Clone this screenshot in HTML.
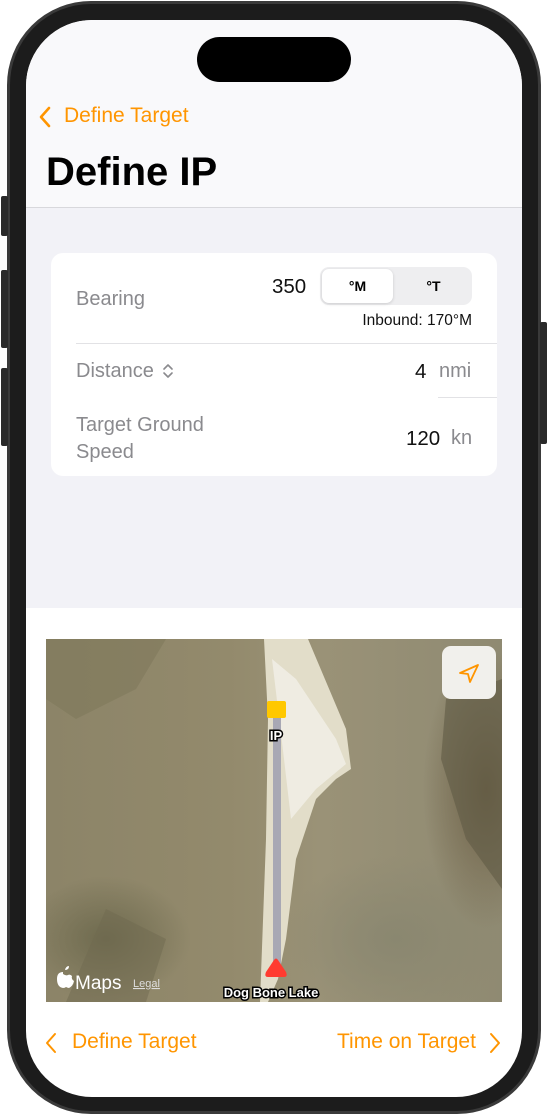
<!DOCTYPE html>
<html><head><meta charset="utf-8"><style>
*{margin:0;padding:0;box-sizing:border-box}
body{width:547px;height:1117px;background:#fff;position:relative;overflow:hidden;font-family:"Liberation Sans",sans-serif}
.frame{position:absolute;left:7px;top:1px;width:534px;height:1113px;border-radius:84px;background:#1c1c1c;border:3px solid #3a3a3a}
.btn{position:absolute;left:1px;width:7px;background:#2a2a2a;border-radius:2px}
.rbtn{position:absolute;right:0;width:7px;background:#2a2a2a;border-radius:2px}
.screen{position:absolute;left:26px;top:20px;width:496px;height:1077px;border-radius:66px;overflow:hidden;background:#fff}
.nav{position:absolute;left:0;top:0;width:100%;height:188px;background:#f9f9fb;border-bottom:1px solid #d8d8dc}
.island{position:absolute;left:171px;top:17px;width:154px;height:45px;border-radius:23px;background:#000}
.gray{position:absolute;left:0;top:188px;width:100%;height:400px;background:#f2f2f7}
.or{color:#ff9500}
.card{position:absolute;left:25px;top:233px;width:446px;height:223px;background:#fff;border-radius:12px}
.lbl{position:absolute;color:#8a8a8e;font-size:20px}
.val{position:absolute;color:#111;font-size:20.5px}
.map{position:absolute;left:20px;top:619px;width:456px;height:363px;overflow:hidden;
background:
radial-gradient(ellipse 120px 90px at 60px 300px,#6e6a4e 0%,transparent 70%),
radial-gradient(ellipse 90px 200px at 440px 150px,#6f6248 0%,transparent 70%),
radial-gradient(ellipse 160px 120px at 350px 300px,#8a8770 0%,transparent 70%),
linear-gradient(90deg,#8c8468 0%,#938a6c 40%,#9a9277 60%,#8f8a72 100%)}
</style></head><body>
<div class="frame"></div>
<div class="btn" style="top:196px;height:40px"></div>
<div class="btn" style="top:270px;height:78px"></div>
<div class="btn" style="top:368px;height:78px"></div>
<div class="rbtn" style="top:322px;height:122px"></div>
<div class="screen">
 <div class="nav">
  <div class="island"></div>
  <svg style="position:absolute;left:12px;top:86px" width="14" height="22"><path d="M11 2 L3 11 L11 20" stroke="#ff9500" stroke-width="2.6" fill="none" stroke-linecap="round" stroke-linejoin="round"/></svg>
  <div class="or" style="position:absolute;left:38px;top:84px;font-size:21px">Define Target</div>
  <div style="position:absolute;left:20px;top:130px;font-size:40px;font-weight:bold;color:#000">Define IP</div>
 </div>
 <div class="gray"></div>
 <div class="card">
  <div class="lbl" style="left:25px;top:35px">Bearing</div>
  <div class="val" style="left:221px;top:22px">350</div>
  <div style="position:absolute;left:269px;top:14px;width:152px;height:38px;background:#eeeef0;border-radius:9px">
   <div style="position:absolute;left:2px;top:2px;width:71px;height:34px;background:#fff;border-radius:7px;box-shadow:0 1px 3px rgba(0,0,0,.15);text-align:center;line-height:34px;font-size:14px;font-weight:bold">°M</div>
   <div style="position:absolute;left:78px;top:2px;width:71px;height:34px;text-align:center;line-height:34px;font-size:14px;font-weight:bold">°T</div>
  </div>
  <div style="position:absolute;right:25px;top:59px;font-size:15.5px;color:#111">Inbound: 170°M</div>
  <div style="position:absolute;left:25px;right:0;top:90px;height:1px;background:#e2e2e5"></div>
  <div class="lbl" style="left:25px;top:107px">Distance</div>
  <svg style="position:absolute;left:110px;top:108px" width="14" height="20"><path d="M3 8 L7 4 L11 8 M3 12 L7 16 L11 12" stroke="#8a8a8e" stroke-width="1.6" fill="none" stroke-linecap="round" stroke-linejoin="round"/></svg>
  <div class="val" style="left:364px;top:107px">4</div>
  <div class="lbl" style="left:388px;top:107px">nmi</div>
  <div style="position:absolute;left:387px;right:0;top:144px;height:1px;background:#e2e2e5"></div>
  <div class="lbl" style="left:25px;top:159px;line-height:27px">Target Ground<br>Speed</div>
  <div class="val" style="left:355px;top:174px">120</div>
  <div class="lbl" style="left:400px;top:174px">kn</div>
 </div>
 <div class="map">
  <svg width="456" height="363" style="position:absolute;left:0;top:0">
   <path d="M218 0 L262 0 L300 90 L305 130 L290 140 L270 160 L250 220 L240 300 L232 340 L222 363 L214 363 L220 200 L222 80 Z" fill="#e2ddc9"/>
   <path d="M226 20 L250 40 L290 100 L300 125 L270 150 L245 180 L238 120 Z" fill="#efece2"/>
   <path d="M0 0 L120 0 L90 50 L30 80 L0 60Z" fill="#7c7658" opacity=".5"/>
   <path d="M400 60 L456 40 L456 250 L420 200 L395 120Z" fill="#5f5a44" opacity=".6"/>
   <path d="M60 270 L120 300 L100 363 L20 363 Z" fill="#6f6a4f" opacity=".5"/>
   <rect x="227" y="75" width="8" height="250" fill="#a8a8b4"/>
   <rect x="221" y="62" width="19" height="17" rx="2" fill="#ffc800"/>
   <text x="230" y="101" text-anchor="middle" font-family="Liberation Sans" font-weight="bold" font-size="13" fill="#fff" stroke="#000" stroke-width="3" paint-order="stroke">IP</text>
   <path d="M222 338 L238 338 Q242 338 240 333 L232 321 Q230 318 228 321 L220 333 Q218 338 222 338Z" fill="#ff3b30"/>
   <text x="225" y="358" text-anchor="middle" font-family="Liberation Sans" font-weight="bold" font-size="13" fill="#fff" stroke="#000" stroke-width="3" paint-order="stroke">Dog Bone Lake</text>
   <path d="M17 333 q-6 0 -6 7 q0 8 6 9 q2 0 3 -1 q2 1 3 1 q4 -2 5 -7 q-3 -2 -2 -5 q-2 -2 -4 -1 q-2 1 -5 -1z M19 331 q1 -4 4 -4 q0 4 -4 4z" fill="#fff"/>
   <text x="29" y="350" font-family="Liberation Sans" font-size="19" fill="#fff">Maps</text>
   <text x="87" y="348" font-family="Liberation Sans" font-size="11" fill="#ddd" text-decoration="underline">Legal</text>
  </svg>
  <div style="position:absolute;left:396px;top:7px;width:54px;height:53px;background:#f1f0ec;border-radius:9px">
   <svg width="54" height="53"><path d="M36 19 L18 27 L26 28 L28 36 Z" stroke="#ff9500" stroke-width="1.8" fill="none" stroke-linejoin="round"/></svg>
  </div>
 </div>
 <svg style="position:absolute;left:18px;top:1012px" width="14" height="22"><path d="M11 2 L3 11 L11 20" stroke="#ff9500" stroke-width="2" fill="none" stroke-linecap="round" stroke-linejoin="round"/></svg>
 <div class="or" style="position:absolute;left:46px;top:1010px;font-size:21px">Define Target</div>
 <div class="or" style="position:absolute;left:311px;top:1010px;font-size:21px">Time on Target</div>
 <svg style="position:absolute;left:462px;top:1012px" width="14" height="22"><path d="M3 2 L11 11 L3 20" stroke="#ff9500" stroke-width="2" fill="none" stroke-linecap="round" stroke-linejoin="round"/></svg>
</div>
</body></html>
